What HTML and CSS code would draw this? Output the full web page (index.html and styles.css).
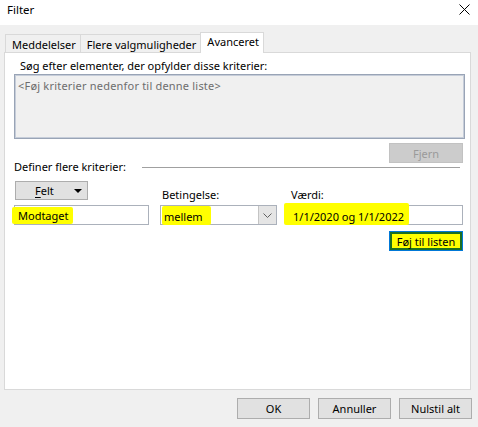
FILE: index.html
```html
<!DOCTYPE html>
<html lang="da">
<head>
<meta charset="utf-8">
<title>Filter</title>
<link rel="stylesheet" href="styles.css">
</head>
<body>
<div class="window">
  <div class="titlebar">
    <span class="title">Filter</span>
    <svg class="close" width="11" height="11" viewBox="0 0 11 11"><path d="M0.5 0.5 L10.5 10.5 M10.5 0.5 L0.5 10.5" stroke="#000" stroke-width="1" fill="none"/></svg>
  </div>
  <div class="tabs">
    <div class="tab">Meddelelser</div>
    <div class="tab">Flere valgmuligheder</div>
    <div class="tab active">Avanceret</div>
  </div>
  <div class="panel">
    <div class="search-label">Søg efter elementer, der opfylder disse kriterier:</div>
    <div class="listbox">&lt;Føj kriterier nedenfor til denne liste&gt;</div>
    <div class="row-right">
      <button class="btn disabled">Fjern</button>
    </div>
    <div class="define">
      <span>Definer flere kriterier:</span>
      <span class="rule"></span>
    </div>
    <div class="criteria">
      <div class="col col-field">
        <button class="btn felt"><span class="felt-text"><u>F</u>elt</span><span class="tri"></span></button>
        <div class="input"><span class="hl hl-field">Modtaget</span></div>
      </div>
      <div class="col col-cond">
        <div class="lbl">Betingelse:</div>
        <div class="input combo">
          <span class="hl hl-cond">mellem</span>
          <span class="dd"><svg width="9" height="5" viewBox="0 0 9 5"><path d="M0.5 0.5 L4.5 4.5 L8.5 0.5" stroke="#606060" fill="none" stroke-width="1"/></svg></span>
        </div>
      </div>
      <div class="col col-val">
        <div class="lbl">Værdi:</div>
        <div class="input"><span class="hl hl-val">1/1/2020 og 1/1/2022</span></div>
      </div>
    </div>
    <div class="row-right add-row">
      <button class="btn add">Føj til listen</button>
    </div>
  </div>
  <div class="footer">
    <button class="btn">OK</button>
    <button class="btn">Annuller</button>
    <button class="btn">Nulstil alt</button>
  </div>
</div>
</body>
</html>
```
FILE: styles.css
```css
* { box-sizing: border-box; }
html, body {
  margin: 0;
  padding: 0;
  background: #f0f0f0;
}
body {
  font-family: "Noto Sans", "Open Sans", sans-serif;
  font-size: 11px;
  line-height: 15px;
  color: #000;
}
.window {
  width: 478px;
  height: 427px;
  overflow: hidden;
  background: #f0f0f0;
}
.titlebar {
  height: 25px;
  background: #fff;
  display: flex;
  justify-content: space-between;
  align-items: flex-start;
  padding: 2px 8px 0 7px;
}
.title { font-size: 11.5px; }
.close { margin-top: 2px; }

.tabs {
  display: flex;
  align-items: flex-end;
  margin: 7px 0 0 5px;
  height: 20px;
}
.tab {
  height: 18px;
  padding: 2px 4px 0 6px;
  border: 1px solid #d9d9d9;
  border-bottom: none;
  border-right: none;
  background: #f0f0f0;
  white-space: nowrap;
}
.tab.active {
  height: 21px;
  margin-bottom: -1px;
  background: #fff;
  border-right: 1px solid #d9d9d9;
  padding: 1px 4px 0 6px;
  position: relative;
  z-index: 1;
}

.panel {
  margin-left: 4px;
  width: 467px;
  height: 338px;
  background: #fff;
  border: 1px solid #d9d9d9;
  padding: 5px 5px 0 9px;
}
.search-label { margin-left: 6px; }
.listbox {
  margin-top: 1px;
  height: 65px;
  background: #f0f0f0;
  border: 1px solid #99a4b6;
  box-shadow: inset 0 0 0 1px #c6cdd9;
  padding: 3px 3px;
  color: #6d6d6d;
  letter-spacing: 0.2px;
}
.row-right {
  display: flex;
  justify-content: flex-end;
  padding-right: 2px;
  margin-top: 4px;
}
.btn {
  font-family: "Noto Sans", "Open Sans", sans-serif;
  font-size: 11px;
  line-height: 15px;
  width: 73px;
  height: 21px;
  padding: 0;
  background: #e1e1e1;
  border: 1px solid #adadad;
  color: #000;
}
.btn.disabled {
  width: 74px;
  height: 20px;
  background: #cccccc;
  border-color: #c2c2c2;
  color: #9a9a9a;
}
.define {
  display: flex;
  align-items: center;
  margin-top: -4px;
}
.rule {
  flex: 1;
  height: 1px;
  background: #a0a0a0;
  margin: 0 5px 0 16px;
  position: relative;
  top: 1px;
}
.criteria {
  display: flex;
  align-items: flex-end;
  margin-top: 7px;
}
.col { display: flex; flex-direction: column; }
.col-field { width: 135px; }
.col-cond { width: 117px; margin-left: 11px; }
.col-val { width: 174px; margin-left: 12px; }
.lbl { margin-left: 2px; margin-bottom: 3px; }
.felt {
  width: 73px;
  height: 19px;
  margin-left: 1px;
  margin-bottom: 5px;
  display: flex;
  align-items: center;
  padding: 0 5px 0 19px;
}
.felt-text { flex: 1; text-align: left; }
.felt u { text-decoration-thickness: 1px; text-underline-offset: 2px; }
.tri {
  width: 0;
  height: 0;
  border-left: 4px solid transparent;
  border-right: 4px solid transparent;
  border-top: 4px solid #000;
}
.input {
  height: 20px;
  border: 1px solid #abb1bb;
  background: #fff;
  padding: 1px 3px 0 4px;
  display: flex;
  align-items: center;
  white-space: nowrap;
}
.combo { padding-right: 0; justify-content: space-between; padding-top: 0; }
.dd {
  width: 18px;
  height: 18px;
  background: #e5e5e5;
  border-left: 1px solid #c4c4c4;
  display: flex;
  align-items: center;
  justify-content: center;
}
.hl {
  background: #ffff00;
  border-radius: 2px;
}
.hl-field { margin-left: -7px; padding: 1px 5px 1px 6px; }
.hl-cond { margin-left: -3px; padding: 3px 8px 1px 2px; }
.hl-val { margin-left: -10px; padding: 6px 5px 1px 9px; margin-top: -4px; }
.add-row { margin-top: 6px; }
.add {
  width: 74px;
  height: 20px;
  background: #ffff00;
  border: 1px solid #0078d7;
  box-shadow: inset 0 0 0 2px #1b6f23;
}
.footer {
  display: flex;
  justify-content: flex-end;
  gap: 8px;
  margin-top: 8px;
  padding-right: 6px;
}
```
